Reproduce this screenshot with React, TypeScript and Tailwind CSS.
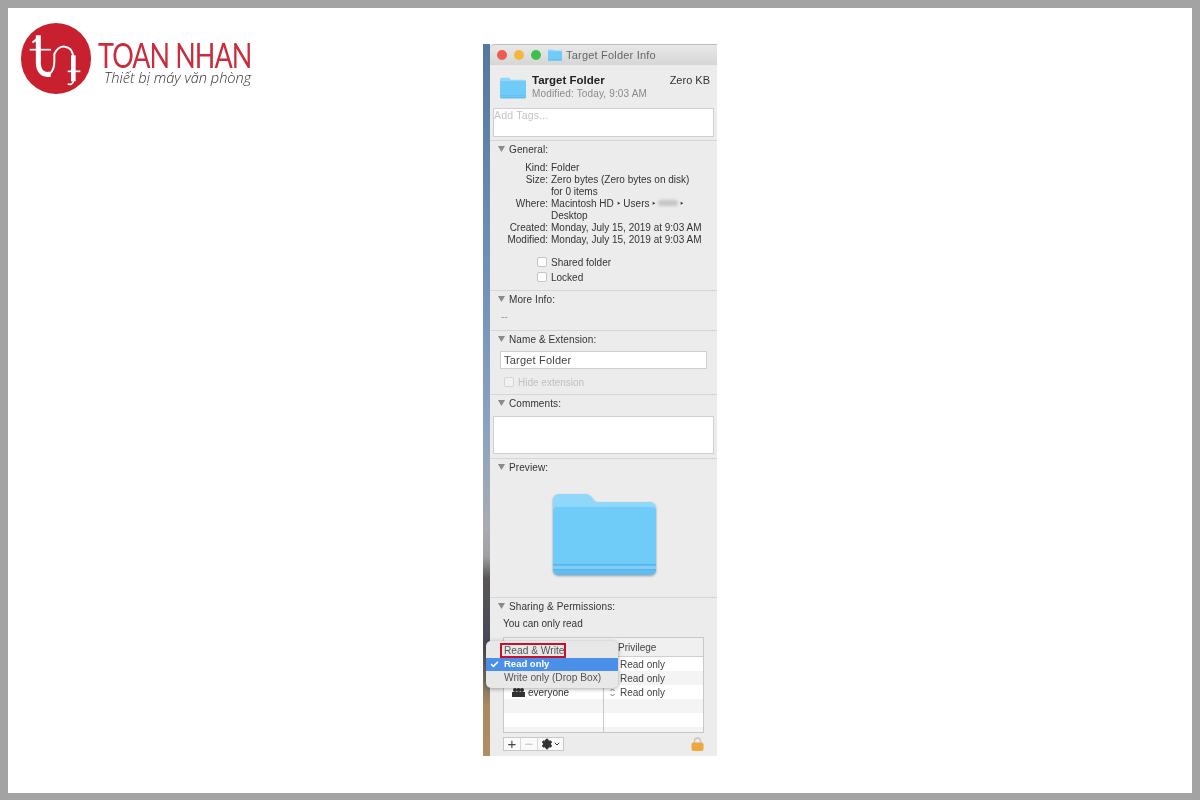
import { Check, ChevronDown, Settings } from 'lucide-react';

const sans = { fontFamily: '"Liberation Sans", Arial, sans-serif' };

const Disclosure = ({ label }: { label: string }) => (
  <div className="flex items-center pl-[8px] h-[14px] text-[10px] text-[#333]">
    <svg width="7" height="6" viewBox="0 0 7 6" className="flex-shrink-0">
      <path d="M0 0h7L3.5 6z" fill="#8a8a8a" />
    </svg>
    <span className="ml-[4px] tracking-[0.1px]">{label}</span>
  </div>
);

const Folder = ({ w, h }: { w: number; h: number }) => (
  <svg width={w} height={h} viewBox="0 0 103 81">
    <path d="M0 6a6 6 0 0 1 6-6h25c5 0 7 2 9 5l3 3h54a6 6 0 0 1 6 6v61a6 6 0 0 1-6 6H6a6 6 0 0 1-6-6z" fill="#8fd8fc" />
    <path d="M0 17a4 4 0 0 1 4-4h95a4 4 0 0 1 4 4v58a6 6 0 0 1-6 6H6a6 6 0 0 1-6-6z" fill="#6fcbf8" />
    <rect x="0" y="70" width="103" height="1.5" fill="#5db3e3" />
    <rect x="0" y="72" width="103" height="3" fill="#7ccff8" />
    <rect x="0" y="75" width="103" height="1" fill="#5db3e3" />
    <path d="M0 76h103a6 5 0 0 1-6 5H6a6 5 0 0 1-6-5z" fill="#62bdee" />
  </svg>
);

const InfoRow = ({ label, children }: { label: string; children: React.ReactNode }) => (
  <div className="flex h-[12px] items-center">
    <span className="w-[61px] text-right pr-[3px] flex-shrink-0">{label}</span>
    <span className="whitespace-nowrap">{children}</span>
  </div>
);

const Box = () => <span className="w-[10px] h-[10px] rounded-[2px] border border-[#c4c4c4] bg-white flex-shrink-0" />;

const Logo = () => (
  <div className="flex items-start blur-[0.4px]">
    <div className="w-[70px] h-[71px] rounded-full bg-[#c8202f] flex-shrink-0">
      <svg width="70" height="70" viewBox="20 15 210 210" fill="none" stroke="#fff">
        <path d="M72 52V135C72 160 88 174 108 168" strokeWidth="15" />
        <path d="M72 55C68 64 62 70 54 73" strokeWidth="6" />
        <path d="M46 95H110" strokeWidth="5" />
        <path d="M106 168C116 160 120 145 120 130V108C127 92 140 84 152 86C168 88 176 100 176 118" strokeWidth="6" />
        <path d="M177 112V190" strokeWidth="14" />
        <path d="M177 188C177 198 168 201 160 198" strokeWidth="5" />
        <path d="M160 160H198" strokeWidth="5" />
      </svg>
    </div>
    <div className="ml-[7px] pt-[16px]">
      <div className="h-[31px] text-[35px] leading-[31px] text-[#c92c3a] tracking-[-1.2px] whitespace-nowrap scale-x-[0.77] origin-left" style={{ fontFamily: 'Lato, sans-serif', fontWeight: 400 }}>
        TOAN NHAN
      </div>
      <div className="text-[14.6px] leading-[15px] italic text-[#333] ml-[6px] whitespace-nowrap" style={{ fontFamily: '"Open Sans", sans-serif', fontWeight: 300 }}>
        Thiết bị máy văn phòng
      </div>
    </div>
  </div>
);

export default function App() {
  return (
    <div className="w-[1200px] h-[800px] overflow-hidden bg-white border-t-[8px] border-b-[7px] border-x-[8px] border-[#a3a3a3] flex" style={sans}>
      {/* Logo */}
      <div className="w-[475px] flex-shrink-0 pl-[13px] pt-[15px]">
        <Logo />
      </div>

      {/* Info window */}
      <div className="mt-[36px] h-[712px] w-[234px] flex-shrink-0 flex bg-[linear-gradient(to_bottom,#54789f_0%,#6d8fb8_30%,#8ea3bf_55%,#a9abb0_68%,#a0a0a2_72%,#5a5654_75%,#46485a_84%,#6b6660_88%,#a98a62_93%,#b08e66_100%)] text-[10px] text-[#333] overflow-hidden relative blur-[0.3px]">
        <div className="w-[7px] flex-shrink-0" />
        <div className="flex-1 flex flex-col bg-[#ececec] min-w-0">
          <div className="h-[21px] bg-gradient-to-b from-[#e8e8e8] to-[#d6d6d6] border-t border-[#b9bec6] rounded-tl-[5px] flex items-center pl-[7px] flex-shrink-0">
            <span className="w-[10px] h-[10px] rounded-full bg-[#ee5a52]" />
            <span className="w-[10px] h-[10px] rounded-full bg-[#f3b73f] ml-[7px]" />
            <span className="w-[10px] h-[10px] rounded-full bg-[#3fbf4c] ml-[7px]" />
            <span className="ml-[7px] flex"><Folder w={14} h={12} /></span>
            <span className="ml-[4px] text-[11px] text-[#666] tracking-[0.2px]">Target Folder Info</span>
          </div>

          <div className="h-[43px] flex-shrink-0 flex pl-[10px] pr-[7px] pt-[9px]">
            <div className="mt-[3px]"><Folder w={26} h={22} /></div>
            <div className="ml-[6px]">
              <div className="text-[11.5px] leading-[12px] font-bold text-[#222]">Target Folder</div>
              <div className="text-[10px] leading-[12px] mt-[2px] text-[#8a8a8a] tracking-[0.15px]">Modified: Today, 9:03 AM</div>
            </div>
            <div className="ml-auto text-[11px] leading-[12px] text-[#333]">Zero KB</div>
          </div>

          <div className="h-[29px] flex-shrink-0 ml-[3px] mr-[3px] bg-white border border-[#cfcfcf] text-[10.5px] text-[#c4c4c4] leading-[13px] tracking-[0.2px]">Add Tags...</div>

          {/* General */}
          <div className="h-[150px] mt-[3px] flex-shrink-0 border-t border-[#d6d6d6] pt-[1px]">
            <Disclosure label="General:" />
            <div className="mt-[5px]">
              <InfoRow label="Kind:">Folder</InfoRow>
              <InfoRow label="Size:">Zero bytes (Zero bytes on disk)</InfoRow>
              <InfoRow label=""><span>for 0 items</span></InfoRow>
              <InfoRow label="Where:">
                <span className="inline-flex items-center">
                  Macintosh HD ‣ Users ‣
                  <span className="inline-block w-[20px] h-[6px] mx-[2px] rounded-full bg-[#c4c4c4] blur-[1.5px]" />
                  ‣
                </span>
              </InfoRow>
              <InfoRow label="">Desktop</InfoRow>
              <InfoRow label="Created:">Monday, July 15, 2019 at 9:03 AM</InfoRow>
              <InfoRow label="Modified:">Monday, July 15, 2019 at 9:03 AM</InfoRow>
            </div>
            <div className="mt-[11px] ml-[47px] flex items-center gap-[4px] h-[12px]"><Box />Shared folder</div>
            <div className="mt-[3px] ml-[47px] flex items-center gap-[4px] h-[12px]"><Box />Locked</div>
          </div>

          {/* More Info */}
          <div className="h-[40px] flex-shrink-0 border-t border-[#d6d6d6] pt-[1px]">
            <Disclosure label="More Info:" />
            <div className="pl-[11px] mt-[3px] text-[#999]">--</div>
          </div>

          {/* Name & Extension */}
          <div className="h-[64px] flex-shrink-0 border-t border-[#d6d6d6] pt-[1px]">
            <Disclosure label="Name & Extension:" />
            <div className="mx-[10px] mt-[5px] h-[18px] bg-white border border-[#cfcfcf] text-[11px] leading-[16px] pl-[3px] text-[#444] tracking-[0.2px]">Target Folder</div>
            <div className="ml-[14px] mt-[7px] flex items-center gap-[4px] h-[12px] text-[#c0c0c0]"><span className="w-[10px] h-[10px] rounded-[2px] border border-[#d4d4d4] bg-[#f2f2f2]" />Hide extension</div>
          </div>

          {/* Comments */}
          <div className="h-[64px] flex-shrink-0 border-t border-[#d6d6d6] pt-[1px]">
            <Disclosure label="Comments:" />
            <div className="mx-[3px] mt-[6px] h-[38px] bg-white border border-[#cfcfcf]" />
          </div>

          {/* Preview */}
          <div className="h-[139px] flex-shrink-0 border-t border-[#d6d6d6] pt-[1px]">
            <Disclosure label="Preview:" />
            <div className="flex justify-center mt-[20px] pl-[2px]">
              <div className="drop-shadow-[0_1px_1px_rgba(0,0,0,0.35)] flex"><Folder w={103} h={81} /></div>
            </div>
          </div>

          {/* Sharing & Permissions */}
          <div className="flex-1 border-t border-[#d6d6d6] pt-[1px] relative">
            <Disclosure label="Sharing & Permissions:" />
            <div className="pl-[13px] mt-[3px] h-[15px] leading-[15px]">You can only read</div>
            <div className="mx-[13px] mt-[6px] h-[96px] border border-[#c8c8c8] bg-white flex flex-col overflow-hidden">
              <div className="h-[19px] flex-shrink-0 bg-[#f0f0f0] border-b border-[#d0d0d0] flex items-center pl-[114px] text-[#444]">Privilege</div>
              {['Read only', 'Read only', 'Read only', '', '', ''].map((privilege, i) => (
                <div key={i} className={`h-[14px] flex-shrink-0 flex items-center ${i % 2 === 1 ? 'bg-[#f4f4f4]' : 'bg-white'}`}>
                  <div className="w-[100px] h-full border-r border-[#c8c8c8] flex items-center pl-[8px] flex-shrink-0">
                    {i === 2 && (
                      <>
                        <svg width="13" height="10" viewBox="0 0 13 10" fill="#333"><circle cx="3" cy="3" r="2" /><circle cx="10" cy="3" r="2" /><circle cx="6.5" cy="3" r="2" /><rect x="0" y="5" width="13" height="5" /></svg>
                        <span className="ml-[3px]">everyone</span>
                      </>
                    )}
                  </div>
                  {privilege && (
                    <div className="pl-[6px] flex items-center text-[#444]">
                      <span className="w-[6px] flex">
                        {i === 2 && (
                          <svg width="5" height="9" viewBox="0 0 5 9" fill="none" stroke="#777" strokeWidth="1"><path d="M.5 3L2.5 1l2 2M.5 6l2 2 2-2" /></svg>
                        )}
                      </span>
                      <span className="ml-[4px]">{privilege}</span>
                    </div>
                  )}
                </div>
              ))}
            </div>
            <div className="ml-[13px] mt-[4px] flex items-center">
              <div className="flex h-[14px] border border-[#c8c8c8] bg-[#fafafa] items-center">
                <div className="w-[17px] text-center text-[15px] leading-[12px] text-[#444] border-r border-[#d8d8d8]">+</div>
                <div className="w-[17px] text-center text-[15px] leading-[12px] text-[#c4c4c4] border-r border-[#d8d8d8]">−</div>
                <div className="w-[25px] flex items-center justify-center text-[#333]">
                  <Settings size={12} fill="#333" strokeWidth={2} />
                  <ChevronDown size={8} strokeWidth={3} />
                </div>
              </div>
              <svg width="13" height="14" viewBox="0 0 13 14" className="ml-auto mr-[13px]">
                <path d="M3.5 6V4a3 3 0 0 1 6 0v2" fill="none" stroke="#c9c4b8" strokeWidth="1.4" />
                <rect x="0.5" y="5.5" width="12" height="8.5" rx="2" fill="#eda83f" />
              </svg>
            </div>

            {/* Privilege dropdown */}
            <div className="absolute left-[-4px] top-[43px] w-[132px] h-[47px] rounded-[5px] bg-[#e8e8e8] shadow-[0_1px_4px_rgba(0,0,0,0.35)] pt-[3px] text-[#555] text-[10.2px]">
              <div className="h-[14px] flex items-center pl-[18px] relative">
                <span className="absolute left-[14px] top-[-1px] w-[66px] h-[15px] border-2 border-[#c8102e]" />
                Read &amp; Write
              </div>
              <div className="h-[13px] bg-[#4a90e8] text-white font-bold text-[9.5px] flex items-center pl-[18px] relative">
                <Check size={9} strokeWidth={4} className="absolute left-[4px] top-[2px]" />
                Read only
              </div>
              <div className="h-[14px] flex items-center pl-[18px]">Write only (Drop Box)</div>
            </div>
          </div>
        </div>
      </div>
    </div>
  );
}
